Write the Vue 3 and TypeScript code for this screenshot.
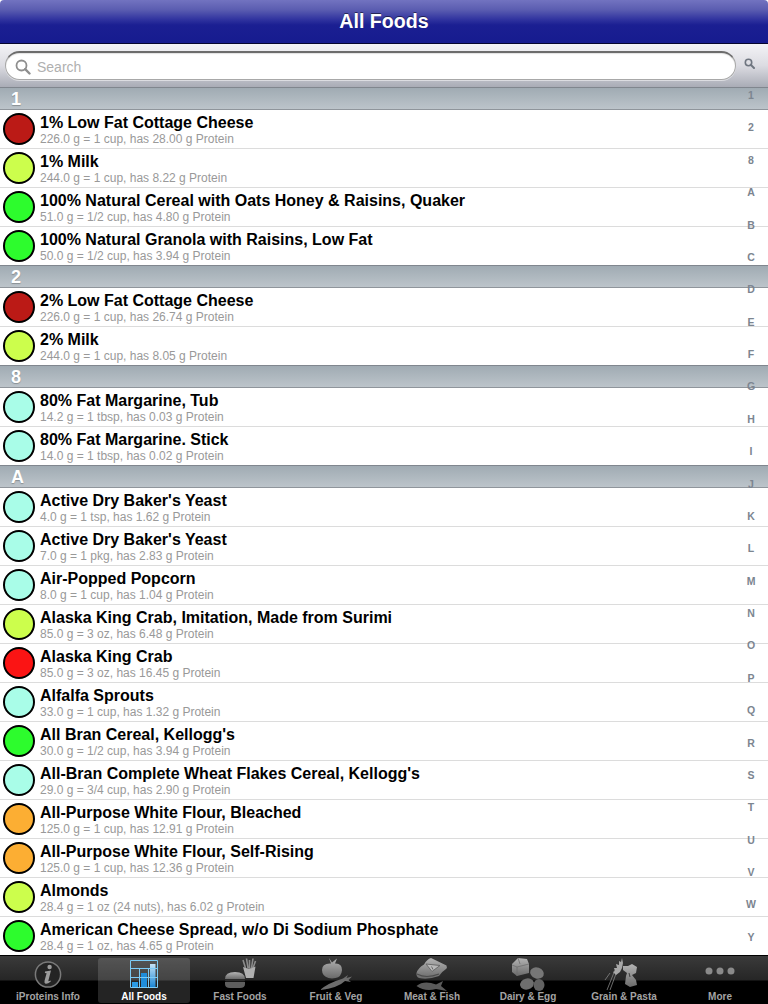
<script setup lang="ts">
type Level = 'red' | 'dark' | 'lime' | 'green' | 'aqua' | 'orange'
interface Food { name: string; sub: string; level: Level }
interface Section { title: string; foods: Food[] }

const sections: Section[] = [
  { title: '1', foods: [
    { name: '1% Low Fat Cottage Cheese', sub: '226.0 g = 1 cup, has 28.00 g Protein', level: 'dark' },
    { name: '1% Milk', sub: '244.0 g = 1 cup, has 8.22 g Protein', level: 'lime' },
    { name: '100% Natural Cereal with Oats Honey & Raisins, Quaker', sub: '51.0 g = 1/2 cup, has 4.80 g Protein', level: 'green' },
    { name: '100% Natural Granola with Raisins, Low Fat', sub: '50.0 g = 1/2 cup, has 3.94 g Protein', level: 'green' },
  ] },
  { title: '2', foods: [
    { name: '2% Low Fat Cottage Cheese', sub: '226.0 g = 1 cup, has 26.74 g Protein', level: 'dark' },
    { name: '2% Milk', sub: '244.0 g = 1 cup, has 8.05 g Protein', level: 'lime' },
  ] },
  { title: '8', foods: [
    { name: '80% Fat Margarine, Tub', sub: '14.2 g = 1 tbsp, has 0.03 g Protein', level: 'aqua' },
    { name: '80% Fat Margarine. Stick', sub: '14.0 g = 1 tbsp, has 0.02 g Protein', level: 'aqua' },
  ] },
  { title: 'A', foods: [
    { name: "Active Dry Baker's Yeast", sub: '4.0 g = 1 tsp, has 1.62 g Protein', level: 'aqua' },
    { name: "Active Dry Baker's Yeast", sub: '7.0 g = 1 pkg, has 2.83 g Protein', level: 'aqua' },
    { name: 'Air-Popped Popcorn', sub: '8.0 g = 1 cup, has 1.04 g Protein', level: 'aqua' },
    { name: 'Alaska King Crab, Imitation, Made from Surimi', sub: '85.0 g = 3 oz, has 6.48 g Protein', level: 'lime' },
    { name: 'Alaska King Crab', sub: '85.0 g = 3 oz, has 16.45 g Protein', level: 'red' },
    { name: 'Alfalfa Sprouts', sub: '33.0 g = 1 cup, has 1.32 g Protein', level: 'aqua' },
    { name: "All Bran Cereal, Kellogg's", sub: '30.0 g = 1/2 cup, has 3.94 g Protein', level: 'green' },
    { name: "All-Bran Complete Wheat Flakes Cereal, Kellogg's", sub: '29.0 g = 3/4 cup, has 2.90 g Protein', level: 'aqua' },
    { name: 'All-Purpose White Flour, Bleached', sub: '125.0 g = 1 cup, has 12.91 g Protein', level: 'orange' },
    { name: 'All-Purpose White Flour, Self-Rising', sub: '125.0 g = 1 cup, has 12.36 g Protein', level: 'orange' },
    { name: 'Almonds', sub: '28.4 g = 1 oz (24 nuts), has 6.02 g Protein', level: 'lime' },
    { name: 'American Cheese Spread, w/o Di Sodium Phosphate', sub: '28.4 g = 1 oz, has 4.65 g Protein', level: 'green' },
  ] },
]

const indexLetters = ['1','2','8','A','B','C','D','E','F','G','H','I','J','K','L','M','N','O','P','Q','R','S','T','U','V','W','Y']

const tabs = ['iProteins Info', 'All Foods', 'Fast Foods', 'Fruit & Veg', 'Meat & Fish', 'Dairy & Egg', 'Grain & Pasta', 'More']
</script>

<template>
  <div class="screen">
    <header class="nav">All Foods</header>

    <div class="search-bar">
      <div class="search-field">
        <svg class="lens" width="16" height="16" viewBox="0 0 16 16">
          <circle cx="6.5" cy="6.5" r="5" fill="none" stroke="#8e8e8e" stroke-width="1.8" />
          <path d="M10.2 10.2 L14.5 14.5" stroke="#8e8e8e" stroke-width="2.4" stroke-linecap="round" />
        </svg>
        <span class="placeholder">Search</span>
      </div>
      <svg class="mini-lens" width="11" height="11" viewBox="0 0 11 11">
        <circle cx="4.5" cy="4.5" r="3.2" fill="none" stroke="#6f7680" stroke-width="1.6" />
        <path d="M7 7 L10 10" stroke="#6f7680" stroke-width="2" stroke-linecap="round" />
      </svg>
    </div>

    <div class="list-wrap">
      <div class="list">
        <section v-for="s in sections" :key="s.title">
          <h2 class="section-head">{{ s.title }}</h2>
          <div v-for="(f, i) in s.foods" :key="i" class="row">
            <span class="dot" :class="f.level"></span>
            <div class="text">
              <div class="name">{{ f.name }}</div>
              <div class="sub">{{ f.sub }}</div>
            </div>
          </div>
        </section>
      </div>
      <div class="index">
        <span v-for="l in indexLetters" :key="l">{{ l }}</span>
      </div>
    </div>

    <nav class="tabbar">
      <div v-for="(t, i) in tabs" :key="t" class="tab" :class="{ active: i === 1 }">
        <svg class="tab-icon" width="64" height="36" viewBox="0 0 64 36">
          <defs>
            <linearGradient id="gi" x1="0" y1="0" x2="0" y2="1">
              <stop offset="0" stop-color="#b4b4b4" />
              <stop offset="1" stop-color="#6a6a6a" />
            </linearGradient>
            <linearGradient id="bar" x1="0" y1="0" x2="0" y2="1">
              <stop offset="0" stop-color="#c4e2f6" />
              <stop offset="1" stop-color="#1b87d6" />
            </linearGradient>
          </defs>

          <g v-if="i === 0">
            <circle cx="32" cy="18.5" r="12.6" fill="#242424" stroke="#7a7a7a" stroke-width="1.5" />
            <circle cx="33.6" cy="11" r="2.2" fill="#9c9c9c" />
            <path d="M29 15.5 L35 14.5 L32.4 24.5 Q32.2 26.1 34.6 24.5 L34.8 25.5 Q31 28.5 29.2 27.5 Q28 26.8 28.6 24.5 L30.6 17.3 L28.9 17.1 Z" fill="#9c9c9c" />
          </g>

          <g v-else-if="i === 1">
            <rect x="20" y="26" width="6" height="5" fill="#2a9ae4" />
            <rect x="29" y="17" width="6" height="14" fill="#1f8ddb" />
            <rect x="38" y="8" width="5.5" height="23" fill="url(#bar)" />
            <path d="M18.5 4.5 H45.5 V31.5 H18.5 Z M18.5 12.5 H45.5 M18.5 21.5 H45.5 M27.5 12.5 V31.5 M36.5 12.5 V31.5" fill="none" stroke="#7ccbf5" stroke-width="1" />
          </g>

          <g v-else-if="i === 2">
            <path d="M17 23 Q17 16 27 16 Q37 16 37 23 Z" fill="url(#gi)" />
            <rect x="17" y="23.5" width="20" height="2" rx="1" fill="#2c2c2c" />
            <path d="M17 26 H37 V28 Q37 32 32 32 H22 Q17 32 17 28 Z" fill="#5e5e5e" />
            <path d="M35 4 L37.5 12 M38.5 2.5 L40 12 M41.5 4 L41.5 12 M45 2.5 L43.5 12 M47.5 5 L45 12" stroke="#8c8c8c" stroke-width="1.6" />
            <path d="M35 11 Q41 14 47.5 10.5 L45.5 22 H38 Z" fill="#b0b0b0" />
          </g>

          <g v-else-if="i === 3">
            <path d="M25 2 L28 6.5 L33 2.5 L31 7.5 Q38 7 38 14 Q37.5 21 31.5 22 L28 22.4 L24.5 22 Q18 20 18 14 Q18 7 27 7.5 Z" fill="url(#gi)" />
            <path d="M16 34 Q24 27 39 22.5 L44 19 L42.5 22 L48 20.5 L44.5 24 L47 26 L41 25 Q34 32 16 34 Z" fill="#6c6c6c" />
          </g>

          <g v-else-if="i === 4">
            <path d="M16.5 17 Q18 12 24 8.5 Q27 3 31 2 L46.5 9.5 Q47.5 12 46 13 Q42 15.5 39 20 Q28 24 19 22 Q16 20.5 16.5 17 Z" fill="url(#gi)" />
            <path d="M26 8 L40 9.5 L32 15.5 Z M31.5 10.5 L33 13.5" fill="#b8b8b8" stroke="#6a6a6a" stroke-width="1" />
            <path d="M17 18 Q26 23 39 18" fill="none" stroke="#4c4c4c" stroke-width="1.2" />
            <path d="M16.5 30 Q24 24 36 28.5 L43 25 L41 30 L47 35 L36 33 Q25 36 16.5 30 Z" fill="#5a5a5a" />
          </g>

          <g v-else-if="i === 5">
            <path d="M16 8 L22 2 L31 3 L33 8 L33 17 L21 20 L16 16 Z" fill="url(#gi)" />
            <path d="M16 9 L21 11 L33 8 M21 11 V20 M22 2 L24 8" fill="none" stroke="#6e6e6e" stroke-width="0.8" />
            <ellipse cx="41" cy="17" rx="7" ry="5.5" fill="#777" transform="rotate(20 41 17)" />
            <ellipse cx="31" cy="28" rx="7" ry="5.5" fill="#6e6e6e" transform="rotate(-15 31 28)" />
            <ellipse cx="43" cy="29" rx="5.5" ry="6" fill="#626262" />
          </g>

          <g v-else-if="i === 6">
            <path d="M15 34 L23 14 M18 34 L25 15 M13 24 L18 17" stroke="#858585" stroke-width="0.8" />
            <path d="M30 2 L29 6 L27 5 L27 9 L24 8 L25 12 L22 12 L23 15 L21 16 L24 19 L28 16 L30 12 L31 7 Z" fill="#a8a8a8" />
            <path d="M31 10 L36 10 L40 8 L45 11 L44 17 L40 19 L44 24 L45 29 L38 31 L33 28 L34 20 L35 17 L31 14 Z" fill="url(#gi)" />
            <path d="M37 17 L38 21" stroke="#3e3e3e" stroke-width="1" />
          </g>

          <g v-else>
            <circle cx="21" cy="15" r="3.5" fill="#8a8a8a" />
            <circle cx="32" cy="15" r="3.5" fill="#8a8a8a" />
            <circle cx="43" cy="15" r="3.5" fill="#8a8a8a" />
          </g>
        </svg>
        <span class="tab-label">{{ t }}</span>
      </div>
    </nav>
  </div>
</template>

<style>
html, body { margin: 0; padding: 0; background: #fff; }
</style>

<style scoped>
.screen {
  width: 768px;
  height: 1004px;
  display: flex;
  flex-direction: column;
  overflow: hidden;
  font-family: "Liberation Sans", Arial, sans-serif;
  background: #fff;
}
.nav {
  height: 43px;
  flex: none;
  border-bottom: 1px solid #05052e;
  background: linear-gradient(#7273c0 0, #5a5cb0 10px, #3235a0 19px, #1b1f92 25px, #161b8f 100%);
  color: #fff;
  font-size: 19.6px;
  font-weight: bold;
  text-align: center;
  line-height: 43px;
  text-shadow: 0 -1px 0 rgba(0, 0, 0, .5);
  border-radius: 4px 4px 0 0;
}
.search-bar {
  height: 44px;
  flex: none;
  box-sizing: border-box;
  padding: 7px 0 0 5px;
  display: flex;
  align-items: flex-start;
  background: linear-gradient(#f3f3f6 0, #dcdce2 50%, #a9acb6 100%);
  border-bottom: 1px solid #80868e;
}
.search-field {
  width: 731px;
  height: 29px;
  box-sizing: border-box;
  border-radius: 15px;
  background: #fff;
  border: 1px solid #a8a8a8;
  border-top: 2px solid #6c6c6c;
  box-shadow: inset 0 1px 1px rgba(0, 0, 0, .12), 0 1px 0 rgba(255, 255, 255, .5);
  display: flex;
  align-items: center;
  padding-left: 9px;
}
.placeholder {
  margin-left: 6px;
  padding-top: 2px;
  font-size: 14px;
  color: #b0b0b0;
}
.lens { margin-top: 1px; }
.mini-lens { margin: 7px 0 0 8px; }
.list-wrap {
  flex: 1;
  min-height: 0;
  position: relative;
}
.list { height: 100%; overflow: hidden; }
.section-head {
  margin: 0;
  height: 22px;
  box-sizing: border-box;
  background: linear-gradient(#a0abb3, #bcc4ca);
  border-bottom: 1px solid #8f959b;
  color: #fff;
  font-size: 18px;
  font-weight: bold;
  line-height: 22px;
  padding-left: 11px;
  text-shadow: 0 1px 1px rgba(0, 0, 0, .25);
}
.row {
  height: 39px;
  box-sizing: border-box;
  border-bottom: 1px solid #dcdcdc;
  display: flex;
  align-items: center;
  background: #fff;
}
.row:last-child { border-bottom-color: #80868e; }
.dot {
  flex: none;
  width: 32px;
  height: 32px;
  box-sizing: border-box;
  margin: 0 5px 0 3px;
  border-radius: 50%;
  border: 2px solid #000;
}
.dark { background: #bb1a16; }
.red { background: #fb1414; }
.lime { background: #ccfe4c; }
.green { background: #2dfc2d; }
.aqua { background: #a9fde8; }
.orange { background: #fcae33; }
.text { min-width: 0; padding-top: 1px; }
.name {
  font-size: 16px;
  font-weight: bold;
  line-height: 18px;
  color: #000;
  white-space: nowrap;
}
.sub {
  font-size: 12px;
  line-height: 14px;
  color: #999;
  white-space: nowrap;
}
.index {
  position: absolute;
  top: 0;
  right: 0;
  bottom: 0;
  width: 34px;
  padding: 0 0 11px;
  box-sizing: border-box;
  display: flex;
  flex-direction: column;
  justify-content: space-between;
  align-items: center;
  font-size: 10.5px;
  line-height: 14px;
  font-weight: bold;
  color: #7c8590;
}
.tabbar {
  flex: none;
  height: 49px;
  box-sizing: border-box;
  border-top: 1px solid #000;
  display: grid;
  grid-template-columns: repeat(8, 96px);
  background: linear-gradient(#3a3a3a 0, #262626 24px, #000 25px, #000 100%);
}
.tab {
  position: relative;
  display: flex;
  flex-direction: column;
  align-items: center;
}
.tab.active::before {
  content: "";
  position: absolute;
  left: 2px;
  right: 2px;
  top: 2px;
  bottom: 1px;
  border-radius: 3px;
  background: rgba(255, 255, 255, .14);
}
.tab-icon { position: relative; flex: none; }
.tab-label {
  position: relative;
  font-size: 10px;
  font-weight: bold;
  line-height: 12px;
  margin-top: -1px;
  color: #a4a4a4;
  white-space: nowrap;
}
.tab.active .tab-label { color: #fff; }
</style>
